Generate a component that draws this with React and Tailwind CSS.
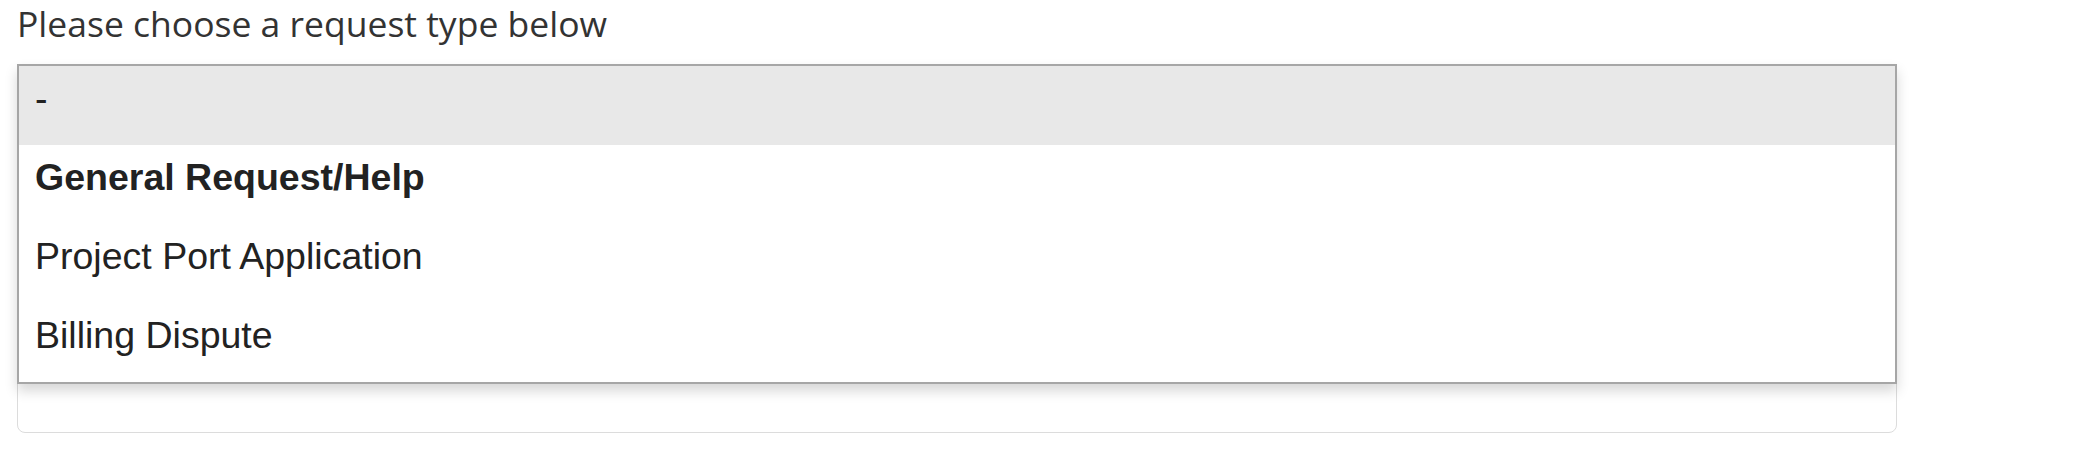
const options = [
  { label: '-', selected: true },
  { label: 'General Request/Help', bold: true },
  { label: 'Project Port Application' },
  { label: 'Billing Dispute' },
];

const App = () => {
  return (
    <div className="w-[2090px] h-[465px] bg-white px-[17px]">
      <p className="text-[35.5px] leading-[46px] text-[#333333] font-['Open_Sans',sans-serif]">
        Please choose a request type below
      </p>

      {/* select control, with its open list drawn over it */}
      <div className="relative mt-[18px] w-[1880px] h-[369px] rounded-[8px] border border-[#dcdcdc]">
        <ul className="absolute -left-px -top-px -right-px border-2 border-[#a6a6a6] bg-white shadow-[0_7px_12px_rgba(0,0,0,0.16)] font-['Liberation_Sans',Arial,sans-serif] text-[37.5px] leading-[43px] text-[#222222]">
          {options.map((o) => (
            <li
              key={o.label}
              className={`h-[79px] pl-[16px] pt-[11px] ${o.selected ? 'bg-[#e8e8e8]' : ''} ${o.bold ? 'font-bold' : ''}`}
            >
              {o.label}
            </li>
          ))}
        </ul>
      </div>
    </div>
  );
};

export default App;
